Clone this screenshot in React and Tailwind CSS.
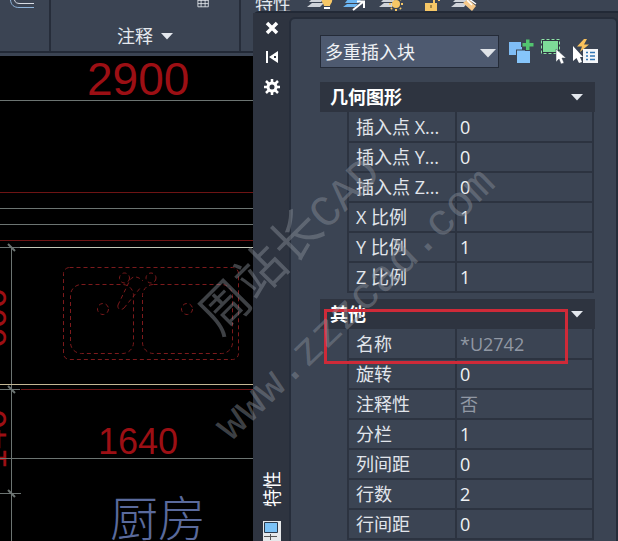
const UI = "font-['Open_Sans','Noto_Sans_CJK_SC',sans-serif]";

const geometry = [
  ["插入点 X...", "0"],
  ["插入点 Y...", "0"],
  ["插入点 Z...", "0"],
  ["X 比例", "1"],
  ["Y 比例", "1"],
  ["Z 比例", "1"],
];

const misc = [
  ["名称", "*U2742", true],
  ["旋转", "0"],
  ["注释性", "否", true],
  ["分栏", "1"],
  ["列间距", "0"],
  ["行数", "2"],
  ["行间距", "0"],
];

function Caret({ className = "" }) {
  return (
    <svg className={className} width="12" height="7" viewBox="0 0 12 7" fill="#e4e8ee" aria-hidden="true">
      <path d="M0 0H12L6 6.5Z" />
    </svg>
  );
}

function Ribbon() {
  return (
    <div className="flex h-14 shrink-0 flex-col bg-[#3b4453]">
      <div className="flex h-[51px] text-[#e4e8ee]">
        <div className="w-[49px] shrink-0">
          <svg width="49" height="10" viewBox="0 0 49 10" fill="none" aria-hidden="true">
            <path d="M10.500 0C11 5 14 7.500 19 7.500H34" stroke="#8fb4da" />
            <path d="M14.500 0C15 2.500 17 3.500 20 3.500H34" stroke="#d8dde5" />
          </svg>
        </div>
        <div className="flex grow flex-col border-x-2 border-[#262d3a]">
          <svg className="ml-auto mr-7" width="15" height="10" viewBox="0 0 15 10" fill="none" stroke="#eef1f5" aria-hidden="true">
            <path d="M.5 0V8.500H13.500V0M.5 4.500H13.500M.5 .5H13.500M4.500 0V8.500M9.500 0V8.500" />
          </svg>
          <button type="button" className="mt-[13px] flex items-center justify-center gap-2 text-[18px] leading-[30px]">
            注释
            <Caret />
          </button>
        </div>
        <div className="w-3 shrink-0" />
      </div>
      <div className="h-[2px] bg-[#222936]" />
    </div>
  );
}

function Drawing() {
  return (
    <svg className="block h-[485px] w-full grow bg-black" viewBox="0 56 253 485" preserveAspectRatio="xMinYMin slice" fill="none" role="img" aria-label="厨房">
      <g fill="#9c0f14" className="font-['Liberation_Sans',sans-serif]">
        <text x="87" y="95" fontSize="46">2900</text>
        <text x="98" y="454" fontSize="36">1640</text>
        <text transform="translate(6 348) rotate(-90)" fontSize="36">600</text>
        <text transform="translate(6 469) rotate(-90)" fontSize="36">140</text>
      </g>
      <text x="110" y="536" fontSize="48" fill="#5a6a9c" className="font-['Noto_Sans_CJK_SC',sans-serif] font-light">厨房</text>
      <g stroke="#6c7472">
        <path d="M0 100.500H253M0 208.500H253M0 224.500H253M0 458.500H253M0 247.500H20M0 389.500H20M0 493.500H21M11.500 247V541" />
        <path d="M8 244L15 251M8 386L15 393M8 490L15 497" strokeWidth="2" />
      </g>
      <path d="M0 192.500H253M0 240.500H253M21 389.500H253" stroke="#6e1414" />
      <path d="M20 247.500H253" stroke="#c3c8b8" />
      <path d="M0 384.500H253" stroke="#c4b795" />
      <g stroke="#7c1a1c" strokeDasharray="4 3">
        <rect x="63.500" y="267.500" width="175" height="92" rx="6" />
        <rect x="70.500" y="284.500" width="63" height="69" rx="11" />
        <rect x="142.500" y="284.500" width="90" height="69" rx="11" />
        <circle cx="103" cy="309" r="5.500" />
        <circle cx="187" cy="309" r="5.500" />
        <circle cx="124.500" cy="278" r="5" />
        <circle cx="151" cy="278" r="5" />
        <path d="M118 305L129 282C131 276 137 275 143 281M124 308L141 287M118 305C117 309 121 311 124 308" />
      </g>
    </svg>
  );
}

function LayerIcons() {
  return (
    <svg className="shrink-0" width="172" height="12" viewBox="0 0 172 12" aria-hidden="true">
      <g fill="#cfd3d9">
        <path d="M5 0H17L14 3H2ZM5 4H17L13 8H0Z" />
        <path d="M77 0H89L86 3H74ZM77 4H88L85 8H72Z" />
        <path d="M149 0H161L158 3H146ZM149 4H160L157 8H144Z" />
      </g>
      <path d="M41 0H55L51 4H38ZM40 5H51L48 8H36Z" fill="#6cb6f2" />
      <path d="M46 11L56 3M50 2.500H57V9" stroke="#fff" strokeWidth="2" fill="none" />
      <path d="M15 0H25C26 4 23 5 23 7H17C17 5 14 4 15 0Z" fill="#f6c766" />
      <path d="M17 8H23V10H17Z" fill="#fff" />
      <circle cx="89" cy="5" r="4" fill="#f6c766" />
      <path d="M82 5H84M94 5H96M84 10L85 9M93 9L94 10M89 10V12M84 0L85 1M94 0L93 1" stroke="#f6c766" strokeWidth="2" />
      <path d="M118 4H130V12H118Z" fill="#f6c766" />
      <path d="M127 4V0M132 0V2" stroke="#f6c766" strokeWidth="2" />
      <path d="M124 6V9" stroke="#5b4a22" strokeWidth="1" />
      <path d="M156 4L161 0L169 7L165 12Z" fill="#f6c98a" />
      <path d="M160 1L165 6M162 0L169 5" stroke="#fff" strokeWidth="1.500" />
    </svg>
  );
}

function PropertySection({ title, rows, children }) {
  return (
    <section className="relative mb-[6px]">
      <h2>
        <button type="button" className="flex h-[30px] w-full items-center justify-between bg-[#2e3440] pl-[10px] pr-3 text-[18px] font-bold leading-[30px] text-white">
          {title}
          <Caret />
        </button>
      </h2>
      <div className="pl-[27px] pr-px">
        <table className="w-full table-fixed border-collapse text-[18px] leading-[28px] text-[#e1e5eb]">
          <tbody>
            {rows.map(([label, value, readOnly]) => (
              <tr key={label} className="h-[30px]">
                <th scope="row" className="w-[108px] whitespace-nowrap border-2 border-t-0 border-[#2c3340] p-0 pl-[7px] text-left font-normal">
                  {label}
                </th>
                <td className="border-2 border-t-0 border-[#2c3340] p-0">
                  <input
                    aria-label={label}
                    defaultValue={value}
                    readOnly={readOnly}
                    className={"block h-7 w-full bg-transparent pl-[3px] outline-none " + (readOnly ? "text-[#9198a4]" : "text-[#f0f2f5]")}
                  />
                </td>
              </tr>
            ))}
          </tbody>
        </table>
      </div>
      {children}
    </section>
  );
}

function SideBar() {
  return (
    <div className="flex w-9 shrink-0 flex-col items-center bg-[#2e3440] pl-[2px]">
      <button type="button" aria-label="关闭" className="mt-[7px]">
        <svg className="block" width="16" height="16" viewBox="0 0 16 16" stroke="#fff" strokeWidth="3.500" aria-hidden="true">
          <path d="M3 3L13 13M13 3L3 13" />
        </svg>
      </button>
      <button type="button" aria-label="自动隐藏" className="mt-[13px]">
        <svg className="block" width="16" height="16" viewBox="0 0 16 16" fill="#fff" aria-hidden="true">
          <path d="M2 2H4V14H2ZM5 8L14 2V14Z" />
          <path d="M10 7H12V9H10Z" fill="#2e3440" />
        </svg>
      </button>
      <button type="button" aria-label="设置" className="mt-[14px]">
        <svg className="block" width="16" height="16" viewBox="0 0 16 16" fill="none" stroke="#fff" aria-hidden="true">
          <circle cx="8" cy="8" r="4" strokeWidth="3" />
          <path d="M8 0V4M8 12V16M0 8H4M12 8H16M2 2L5 5M11 11L14 14M14 2L11 5M5 11L2 14" strokeWidth="2.500" />
        </svg>
      </button>
      <div className="grow" />
      <div className="rotate-180 text-[18px] leading-[20px] text-white [writing-mode:vertical-rl]">
        <span className="[text-orientation:sideways]">特性</span>
      </div>
      <svg className="mt-[14px] shrink-0" width="18" height="20" viewBox="0 0 18 20" aria-hidden="true">
        <path d="M0 0H18V20H0Z" fill="#e6e8ea" />
        <path d="M1.500 1.500H14.500V11.500H1.500Z" fill="#7cc3f7" stroke="#2b3a4c" />
        <path d="M1 15.500H14M7.500 13V19" stroke="#555" />
      </svg>
    </div>
  );
}

function Toolbar() {
  return (
    <div className="-mr-[3px] mb-[14px] flex items-center">
      <div className="relative min-w-0 grow">
        <select aria-label="对象类型" className="block h-[33px] w-full appearance-none border border-[#242b38] bg-[#4e5a70] pl-1 text-[18px] leading-[30px] text-[#eef1f5] outline-none">
          <option>多重插入块</option>
        </select>
        <svg className="pointer-events-none absolute right-[3px] top-[14px]" width="16" height="9" viewBox="0 0 16 9" fill="#dfe3e8" aria-hidden="true">
          <path d="M0 0H16L8 8.500Z" />
        </svg>
      </div>
      <button type="button" aria-label="切换 PICKADD" className="ml-[10px]">
        <svg width="25" height="25" viewBox="0 0 25 25" aria-hidden="true">
          <path d="M0 3H13V16H0Z" fill="#7fbdf5" />
          <path d="M7 10.500H22V24.500H7Z" fill="#3b4453" />
          <path d="M8 11.500H21V24H8Z" fill="#86c5fa" />
          <path d="M16 0H21V3H25V8H21V12H16V8H12V3H16Z" fill="#3b4453" />
          <path d="M17 .5H20.500V4H24.500V7.500H20.500V11H17V7.500H13.500V4H17Z" fill="#52c46f" />
        </svg>
      </button>
      <button type="button" aria-label="选择对象" className="ml-[7px]">
        <svg width="25" height="25" viewBox="0 0 25 25" aria-hidden="true">
          <path d="M.5 .5H18.500V14.500H.5Z" fill="#2e3440" />
          <path d="M2 2H17V13H2Z" fill="#7ddb98" />
          <path d="M.5 .5H18.500V14.500H.5Z" fill="none" stroke="#8fe5a8" strokeDasharray="3 2" />
          <path d="M15 10V23L18 20L20 25L23 24L21 19H25Z" fill="#fff" stroke="#3b4453" strokeWidth=".5" />
        </svg>
      </button>
      <button type="button" aria-label="快速选择" className="ml-[7px]">
        <svg width="25" height="25" viewBox="0 0 25 25" aria-hidden="true">
          <path d="M11 0L4 7.500H9L7 13L16 5.500H11L14 0Z" fill="#f8c15c" />
          <path d="M0 7V22L3.500 19L6 24L9 23L7 18H10Z" fill="#fff" />
          <path d="M10 10H25V24H10Z" fill="#f4f6f8" />
          <path d="M13 13.500H15M13 17H15M13 20.500H15M17 13.500H22M17 17H22M17 20.500H22" stroke="#3277b5" strokeWidth="1.500" />
        </svg>
      </button>
    </div>
  );
}

export default function App() {
  return (
    <main className={"relative flex h-screen overflow-hidden bg-[#3b4453] " + UI}>
      <div className="flex w-[253px] shrink-0 flex-col">
        <Ribbon />
        <Drawing />
      </div>
      <div className="flex min-w-0 grow flex-col">
        <div className="flex h-[11px] shrink-0 items-end overflow-hidden pl-[2px] text-[18px] leading-[14px] text-[#e4e8ee]">
          <span className="mr-4 shrink-0">特性</span>
          <LayerIcons />
        </div>
        <div className="flex min-h-0 grow rounded-tl-md border-t-2 border-[#222936] bg-[#2e3440]">
          <SideBar />
          <div className="mt-1 min-w-0 grow overflow-hidden rounded-t-md border-2 border-b-0 border-[#262d3a] bg-[#3b4453] pl-[29px] pr-[21px] pt-4">
            <Toolbar />
            <PropertySection title="几何图形" rows={geometry} />
            <PropertySection title="其他" rows={misc}>
              <div className="pointer-events-none absolute left-1 right-[27px] top-[10px] h-[55px] border-[3px] border-[#cf2a38]" />
            </PropertySection>
          </div>
        </div>
      </div>
      <svg className="pointer-events-none absolute left-0 top-0" width="618" height="541" viewBox="0 0 618 541" fill="#8a909a" fillOpacity=".45" aria-hidden="true">
        <g transform="translate(220 337) rotate(-45)">
          <text className="font-['Noto_Sans_CJK_SC',sans-serif]" fontSize="50">周站长</text>
          <text x="150" className="font-['Liberation_Mono',monospace]" fontSize="44">CAD</text>
        </g>
        <text transform="translate(231 442) rotate(-44)" className="font-['Liberation_Mono',monospace]" fontSize="44">www.zzzcad.com</text>
      </svg>
    </main>
  );
}
